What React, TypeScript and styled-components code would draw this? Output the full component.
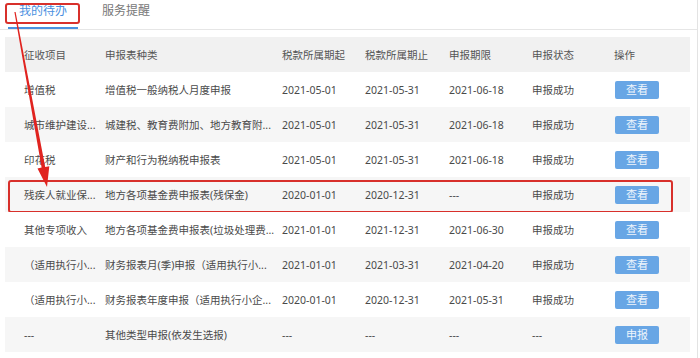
import styled, { createGlobalStyle } from 'styled-components';

const GlobalStyle = createGlobalStyle`
  html, body {
    margin: 0;
    padding: 0;
    background: #fff;
  }
  body {
    font-family: "Noto Sans", "Noto Sans CJK SC", sans-serif;
  }
`;

const Page = styled.div`
  position: relative;
  width: 697px;
  height: 358px;
  border-right: 1px solid #e3e3e3;
  overflow: hidden;
`;

const TabBar = styled.div`
  position: relative;
  display: flex;
  gap: 13px;
  height: 29px;
  padding-left: 8px;
  border-bottom: 1px solid #e6e6e6;
`;

const Tab = styled.div<{ $active?: boolean }>`
  width: 70px;
  height: 29px;
  box-sizing: border-box;
  padding-top: 2px;
  line-height: 18px;
  font-size: 12px;
  text-align: center;
  color: ${(p) => (p.$active ? '#4a90df' : '#777')};
  border-bottom: 2px solid ${(p) => (p.$active ? '#4a90df' : 'transparent')};
`;

const TabMark = styled.div`
  position: absolute;
  left: 5px;
  top: 3px;
  width: 75px;
  height: 21px;
  box-sizing: border-box;
  border: 2px solid #d8302b;
  border-radius: 3px;
`;

const Table = styled.div`
  margin: 7px 7px 0 5px;
  display: flex;
  flex-direction: column;
`;

const Row = styled.div<{ $head?: boolean; $stripe?: boolean }>`
  position: relative;
  display: grid;
  grid-template-columns: 81px 177px 83px 84px 83px 82px 1fr;
  align-items: center;
  height: 35px;
  padding-left: 11px;
  font-size: 10.5px;
  color: ${(p) => (p.$head ? '#555' : '#4a4a4a')};
  background: ${(p) => (p.$head ? '#f1f1f1' : p.$stripe ? '#f6f6f6' : '#fff')};
`;

const Cell = styled.div`
  padding-left: 8px;
  white-space: nowrap;
  min-width: 0;
`;

const ViewButton = styled.div`
  margin-left: 1px;
  width: 44px;
  height: 18px;
  line-height: 18px;
  border-radius: 2px;
  background: #68a6e5;
  color: #eef5fc;
  font-size: 11px;
  text-align: center;
`;

const RowMark = styled.div`
  position: absolute;
  left: 3px;
  top: 3px;
  width: 665px;
  height: 33px;
  box-sizing: border-box;
  border: 2px solid #d8302b;
  border-radius: 3px;
  pointer-events: none;
`;

const Arrow = styled.svg`
  position: absolute;
  left: 0;
  top: 0;
  pointer-events: none;
`;

type Item = {
  item: string;
  form: string;
  start: string;
  end: string;
  due: string;
  status: string;
  action: string;
};

const rows: Item[] = [
  { item: '增值税', form: '增值税一般纳税人月度申报', start: '2021-05-01', end: '2021-05-31', due: '2021-06-18', status: '申报成功', action: '查看' },
  { item: '城市维护建设...', form: '城建税、教育费附加、地方教育附...', start: '2021-05-01', end: '2021-05-31', due: '2021-06-18', status: '申报成功', action: '查看' },
  { item: '印花税', form: '财产和行为税纳税申报表', start: '2021-05-01', end: '2021-05-31', due: '2021-06-18', status: '申报成功', action: '查看' },
  { item: '残疾人就业保...', form: '地方各项基金费申报表(残保金)', start: '2020-01-01', end: '2020-12-31', due: '---', status: '申报成功', action: '查看' },
  { item: '其他专项收入', form: '地方各项基金费申报表(垃圾处理费...', start: '2021-01-01', end: '2021-12-31', due: '2021-06-30', status: '申报成功', action: '查看' },
  { item: '（适用执行小...', form: '财务报表月(季)申报（适用执行小...', start: '2021-01-01', end: '2021-03-31', due: '2021-04-20', status: '申报成功', action: '查看' },
  { item: '（适用执行小...', form: '财务报表年度申报（适用执行小企...', start: '2020-01-01', end: '2020-12-31', due: '2021-05-31', status: '申报成功', action: '查看' },
  { item: '---', form: '其他类型申报(依发生选报)', start: '---', end: '---', due: '---', status: '---', action: '申报' },
];

const App = () => {
  return (
    <>
      <GlobalStyle />
      <Page>
        <TabBar>
          <Tab $active>我的待办</Tab>
          <Tab>服务提醒</Tab>
          <TabMark />
        </TabBar>
        <Table>
          <Row $head>
            <Cell>征收项目</Cell>
            <Cell>申报表种类</Cell>
            <Cell>税款所属期起</Cell>
            <Cell>税款所属期止</Cell>
            <Cell>申报期限</Cell>
            <Cell>申报状态</Cell>
            <Cell>操作</Cell>
          </Row>
          {rows.map((r, i) => (
            <Row key={i} $stripe={i % 2 === 1}>
              <Cell>{r.item}</Cell>
              <Cell>{r.form}</Cell>
              <Cell>{r.start}</Cell>
              <Cell>{r.end}</Cell>
              <Cell>{r.due}</Cell>
              <Cell>{r.status}</Cell>
              <Cell>
                <ViewButton>{r.action}</ViewButton>
              </Cell>
              {i === 3 && <RowMark />}
            </Row>
          ))}
        </Table>
        <Arrow width="700" height="358" viewBox="0 0 700 358">
          <polygon
            points="14.4,12.1 15.6,11.9 45.2,167 49.3,166.2 47,187 37.5,168.4 41.6,167.6"
            fill="#e0231f"
          />
        </Arrow>
      </Page>
    </>
  );
};

export default App;
